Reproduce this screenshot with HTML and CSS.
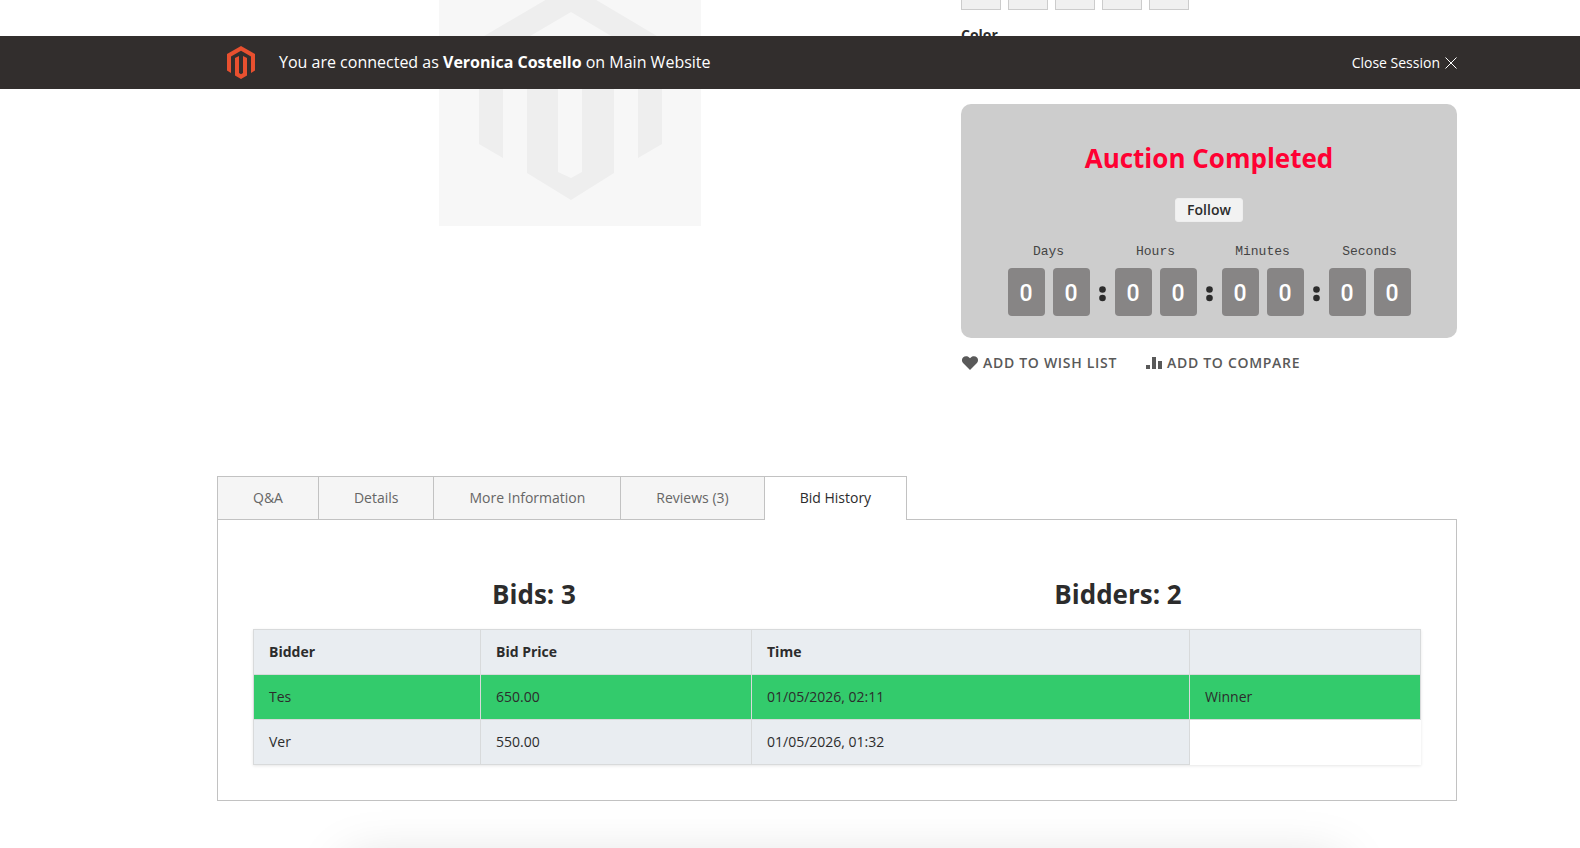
FILE: index.html
```html
<!DOCTYPE html>
<html lang="en">
<head>
    <meta charset="UTF-8">
    <meta name="viewport" content="width=device-width, initial-scale=1.0">
    <title>Bid History</title>
    <link rel="stylesheet" href="styles.css">
</head>
<body>
    <div class="session-bar">
        <div class="container session-inner">
            <svg class="session-logo" viewBox="0 0 28 33" aria-hidden="true">
                <path fill="#e8502f" d="M14 0L0 8V24.500L4 27V10.500L14 4.700L24 10.500V27L28 24.500V8ZM8 12V29.400L14 33L20 29.400V12L16 10V27L14 28.200L12 27V10Z"/>
            </svg>
            <p class="session-text">You are connected as <strong>Veronica Costello</strong> on Main Website</p>
            <a href="#" class="session-close">Close Session
                <svg width="12" height="12" viewBox="0 0 12 12" aria-hidden="true"><path d="M0.500 0.500L11.500 11.500M11.500 0.500L0.500 11.500" stroke="#fff" fill="none"/></svg>
            </a>
        </div>
    </div>

    <main class="page">
        <div class="container">
            <div class="product">
                <div class="product-media">
                    <svg class="placeholder" viewBox="0 0 262 226" role="img" aria-label="Product image">
                        <rect width="262" height="226" fill="#f7f7f7"/>
                        <path fill="#eee" d="M132 -15L40 39V144L64 158V52L132 12L199 52V158L223 144V39ZM88 66V173L132 200L175 173V66L143 48V172L132 178L119 172V48Z"/>
                    </svg>
                </div>

                <div class="product-info">
                    <div class="swatches">
                        <span class="swatch"></span>
                        <span class="swatch"></span>
                        <span class="swatch"></span>
                        <span class="swatch"></span>
                        <span class="swatch"></span>
                    </div>
                    <div class="swatch-label">Color</div>

                    <div class="auction">
                        <h2 class="auction-title">Auction Completed</h2>
                        <button type="button" class="follow">Follow</button>
                        <div class="countdown">
                            <div class="unit">
                                <span class="unit-label">Days</span>
                                <div class="digits"><span>0</span><span>0</span></div>
                            </div>
                            <svg class="colon" viewBox="0 0 8 48"><circle cx="4" cy="21.500" r="3.300"/><circle cx="4" cy="30" r="3.300"/></svg>
                            <div class="unit">
                                <span class="unit-label">Hours</span>
                                <div class="digits"><span>0</span><span>0</span></div>
                            </div>
                            <svg class="colon" viewBox="0 0 8 48"><circle cx="4" cy="21.500" r="3.300"/><circle cx="4" cy="30" r="3.300"/></svg>
                            <div class="unit">
                                <span class="unit-label">Minutes</span>
                                <div class="digits"><span>0</span><span>0</span></div>
                            </div>
                            <svg class="colon" viewBox="0 0 8 48"><circle cx="4" cy="21.500" r="3.300"/><circle cx="4" cy="30" r="3.300"/></svg>
                            <div class="unit">
                                <span class="unit-label">Seconds</span>
                                <div class="digits"><span>0</span><span>0</span></div>
                            </div>
                        </div>
                    </div>

                    <div class="product-links">
                        <a href="#">
                            <svg width="18" height="16" viewBox="0 0 18 16" aria-hidden="true"><path d="M9 15L2.300 8.300C0.600 6.500 0.500 3.900 2 2.400C3.800 0.600 7.200 0.700 9 3.200C10.800 0.700 14.200 0.600 16 2.400C17.500 3.900 17.400 6.500 15.700 8.300Z"/></svg>
                            Add to Wish List
                        </a>
                        <a href="#">
                            <svg width="18" height="16" viewBox="0 0 18 16" aria-hidden="true"><path d="M1 10H5V14H1ZM7 2H11V14H7ZM13 6H17V14H13Z"/></svg>
                            Add to Compare
                        </a>
                    </div>
                </div>
            </div>

            <nav class="tabs">
                <a href="#" class="tab">Q&amp;A</a>
                <a href="#" class="tab">Details</a>
                <a href="#" class="tab">More Information</a>
                <a href="#" class="tab">Reviews (3)</a>
                <a href="#" class="tab active">Bid History</a>
            </nav>
            <section class="tab-panel">
                <div class="totals">
                    <h2>Bids: 3</h2>
                    <h2>Bidders: 2</h2>
                </div>
                <table class="bids">
                    <colgroup>
                        <col class="col-bidder">
                        <col class="col-price">
                        <col class="col-time">
                        <col class="col-status">
                    </colgroup>
                    <thead>
                        <tr>
                            <th>Bidder</th>
                            <th>Bid Price</th>
                            <th>Time</th>
                            <th></th>
                        </tr>
                    </thead>
                    <tbody>
                        <tr class="winner">
                            <td>Tes</td>
                            <td>650.00</td>
                            <td>01/05/2026, 02:11</td>
                            <td>Winner</td>
                        </tr>
                        <tr>
                            <td>Ver</td>
                            <td>550.00</td>
                            <td>01/05/2026, 01:32</td>
                        </tr>
                    </tbody>
                </table>
            </section>
        </div>
        <div class="container">
            <div class="next-block"></div>
        </div>
    </main>
</body>
</html>
```
FILE: styles.css
```css
* {
    box-sizing: border-box;
}
body {
    margin: 0;
    font-family: "Open Sans", "Noto Sans", sans-serif;
    font-size: 14px;
    line-height: 20px;
    color: #2c2c2c;
    background-color: #fff;
}
h2, p {
    margin: 0;
}
a {
    text-decoration: none;
}
.page {
    height: 100vh;
    overflow: hidden;
}
/* the column sits right of center, next to a 94px gutter */
.container {
    max-width: 1374px;
    margin: 0 auto;
    padding: 0 20px 0 114px;
}
@media (min-width: 1374px) {
    .container {
        max-width: none;
        padding-left: calc(50% - 573px);
        padding-right: calc(50% - 667px);
    }
}

/* session bar */
.session-bar {
    position: fixed;
    top: 36px;
    left: 0;
    right: 0;
    z-index: 10;
    background-color: #322e2d;
    color: #fff;
}
.session-inner {
    display: flex;
    align-items: center;
    height: 53px;
}
.session-logo {
    width: 28px;
    height: 33px;
    margin: 0 24px 0 10px;
}
.session-text {
    padding-bottom: 2px;
    font-size: 16px;
}
.session-close {
    display: flex;
    align-items: center;
    gap: 5px;
    margin-left: auto;
    color: #fff;
}

/* product */
.product {
    display: flex;
    justify-content: space-between;
}
.product-media {
    width: 57%;
}
.placeholder {
    display: block;
    width: 262px;
    height: 226px;
    margin: 0 auto;
}
.product-info {
    width: 40%;
}
.swatches {
    display: flex;
    gap: 7px;
}
.swatch {
    width: 40px;
    height: 10px;
    border: 1px solid #ccc;
    border-top: none;
    background-color: #f0f0f0;
}
.swatch-label {
    margin: 15px 0 59px;
    font-weight: bold;
}
.auction {
    display: flex;
    flex-direction: column;
    align-items: center;
    padding: 36px 20px 22px;
    border-radius: 10px;
    background-color: #cdcdcd;
}
.auction-title {
    font-size: 26px;
    line-height: 36px;
    color: #ff0033;
}
.follow {
    margin: 22px 0 20px;
    padding: 0 11px;
    border: 1px solid #eee;
    border-radius: 3px;
    background-color: #f2f2f2;
    color: #2c2c2c;
    font: 600 14px/22px "Open Sans", sans-serif;
    cursor: pointer;
}
.countdown {
    display: flex;
    align-items: flex-end;
    gap: 8px;
}
.unit {
    text-align: center;
}
.unit-label {
    display: block;
    margin-bottom: 6px;
    font-family: "Courier New", "Liberation Mono", monospace;
    font-size: 13px;
    color: #444;
}
.digits {
    display: flex;
    gap: 8px;
}
.digits span {
    width: 37px;
    padding-top: 3px;
    border-radius: 4px;
    background-color: #878585;
    color: #fff;
    font-family: Roboto, sans-serif;
    font-size: 23px;
    font-weight: 500;
    line-height: 45px;
}
.colon {
    width: 9px;
    height: 48px;
    fill: #2c2c2c;
}
.product-links {
    display: flex;
    gap: 28px;
    margin-top: 15px;
}
.product-links a {
    display: flex;
    align-items: center;
    gap: 4px;
    color: #595959;
    font-weight: 600;
    letter-spacing: 0.05em;
    text-transform: uppercase;
}
.product-links svg {
    fill: #595959;
}

/* tabs */
.tabs {
    display: flex;
    margin-top: 103px;
}
.tab {
    padding: 11px 35px;
    border: 1px solid #c2c2c2;
    border-right: none;
    border-bottom: none;
    background-color: #f5f5f5;
    color: #666;
}
.tab.active {
    border-right: 1px solid #c2c2c2;
    margin-bottom: -1px;
    background-color: #fff;
    color: #2c2c2c;
    z-index: 1;
}
.tab-panel {
    padding: 56px 35px 35px;
    border: 1px solid #c2c2c2;
}
.totals {
    display: flex;
}
.totals h2 {
    flex: 1;
    padding-right: 22px;
    font-size: 26px;
    line-height: 36px;
    text-align: center;
}
.bids {
    width: 100%;
    margin-top: 17px;
    border-collapse: collapse;
    table-layout: fixed;
    box-shadow: 0 1px 3px rgba(0, 0, 0, 0.1);
}
.col-bidder {
    width: 227px;
}
.col-price {
    width: 271px;
}
.col-time {
    width: 438px;
}
.bids th,
.bids td {
    height: 45px;
    padding: 0 15px;
    border: 1px solid #d8dadb;
    background-color: #e9edf1;
    text-align: left;
}
.bids .winner td {
    background-color: #33cb6c;
}

/* top of the block below the fold */
.next-block {
    height: 200px;
    margin: 60px 116px 0 130px;
    box-shadow: 0 0 50px rgba(0, 0, 0, 0.15);
}
```
